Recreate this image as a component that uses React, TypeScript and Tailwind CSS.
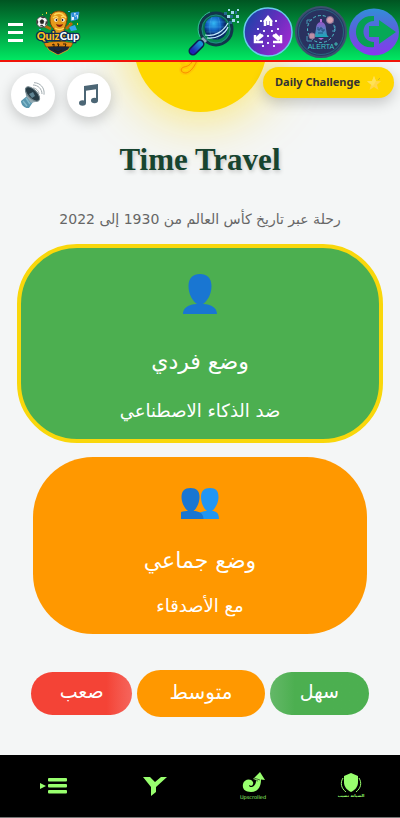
import type { ReactNode } from "react";
import clsx from "clsx";

const QuizCupLogo = () => (
  <svg viewBox="0 0 46 46" className="size-[46px]" aria-hidden="true">
    <g fill="#f4c430">
      <rect x="11" y="3" width="1" height="2" />
      <rect x="33" y="2" width="2" height="1" fill="#38bdf8" />
      <rect x="7" y="5" width="1" height="1" fill="#a3e635" />
      <rect x="15" y="5" width="1" height="1" fill="#f97316" />
      <rect x="34" y="14" width="1" height="2" fill="#facc15" />
      <rect x="4" y="20" width="2" height="1" fill="#38bdf8" />
      <rect x="42" y="14" width="1" height="2" fill="#facc15" />
    </g>
    <path d="M16 20l-6-3M31 20l6-6" stroke="#b86a08" strokeWidth="3" />
    <path d="M24 2c6 0 9 4 8 9-1 4-1 6-3 9l2 12H17l2-12c-3-3-4-6-4-10 0-5 4-8 9-8z" fill="#e59a1b" stroke="#7a4307" />
    <path d="M19 6c3-3 8-2 10 1M18 9c2-2 4-2 5 0M26 8c2-1 4-1 5 1M20 19c3 2 6 2 9 0" fill="none" stroke="#ffd65a" strokeWidth="1.4" />
    <circle cx="21" cy="11" r="1.8" fill="#fff" />
    <circle cx="28" cy="11" r="1.8" fill="#fff" />
    <circle cx="21.5" cy="11" r=".9" fill="#111" />
    <circle cx="27.5" cy="11" r=".9" fill="#111" />
    <path d="M21 15c2 1 5 1 7 0-1 4-6 4-7 0z" fill="#8b1a10" />
    <circle cx="7" cy="13" r="5.5" fill="#f5f5f5" stroke="#333" strokeWidth=".8" />
    <path d="M5 12l2-1.600 2 1.600-.8 2.600H5.800zM2 11l1 2-1 2M6 8l2 1 2-1M11 12l1 2-2 2M5 17l2-1 2 2" fill="#222" stroke="#222" strokeWidth=".6" />
    <path d="M36 4l8-1-1 7-7 2z" fill="#e8f7ff" stroke="#2080c8" strokeWidth=".8" />
    <path d="M36 4l3 0 1 4-3 0zM41 3l3 0-1 3-3 1zM39 8l3-1 0 3-3 1z" fill="#2b8ddb" />
    <path d="M34 18l6-2 2 5-6 1z" fill="#36a6ed" />
    <path d="M10 35h27l-4 6-10 5-9-5z" fill="#18263c" stroke="#f4a51c" strokeWidth=".8" />
    <path d="M9 34c9-2 20-2 29 0l-2 4c-8-1-17-1-25 0z" fill="#e38a13" stroke="#603608" strokeWidth=".6" />
    <path d="M17 36l2-1v3M22 35h2l-1 3M28 35l3 0-1 3M19 41l4 2 4-2" fill="none" stroke="#2a1a08" />
    <text x="23" y="31" textAnchor="middle" stroke="#102c55" strokeWidth="2.500" paintOrder="stroke" className="font-['Lato'] text-[11px] font-black">
      <tspan fill="#ffc21f">Quiz</tspan>
      <tspan fill="#fff">Cup</tspan>
    </text>
  </svg>
);

const SearchLogo = () => (
  <svg viewBox="0 0 54 50" className="h-[50px] w-[54px]" aria-hidden="true">
    <defs>
      <radialGradient id="globe" cx=".4" cy=".3">
        <stop offset="0" stopColor="#32b8f4" />
        <stop offset=".6" stopColor="#1262c4" />
        <stop offset="1" stopColor="#082866" />
      </radialGradient>
      <linearGradient id="handle" x1="0" x2="1" y1="1" y2="0">
        <stop offset="0" stopColor="#1f23b5" />
        <stop offset="1" stopColor="#1691d2" />
      </linearGradient>
    </defs>
    <circle cx="29" cy="22" r="16" fill="#0b5f55" fillOpacity=".55" stroke="#12344c" strokeWidth="3" />
    <circle cx="29" cy="22" r="14" fill="none" stroke="#2b8b9c" strokeWidth=".7" />
    <path d="M13 30A18 18 0 0 1 23 5" fill="none" stroke="#43c6b0" strokeWidth=".8" />
    <circle cx="29" cy="21" r="11.500" fill="url(#globe)" />
    <path d="M19 15h20M18 20h22M19 25h20M25 10c-3 7-3 15 0 22M31 10c3 7 3 15-1 22" fill="none" stroke="#62cdfb" strokeWidth=".4" opacity=".6" />
    <path d="M18 28c9 2 18-3 23-12M20 31c10 1 18-4 21-11" fill="none" stroke="#c3edff" strokeWidth="1.200" />
    <path d="M15 31l4 4" stroke="#87a6b8" strokeWidth="3" />
    <path d="M13 37L6 44" stroke="#0d1d55" strokeWidth="9" strokeLinecap="round" />
    <path d="M13 37L6 44" stroke="url(#handle)" strokeWidth="6" strokeLinecap="round" />
    <path d="M40 8h3v3h-3zM44 4h3v3h-3zM49 8h3v3h-3zM45 12h3v3h-3zM41 2h2v2h-2zM50 2h2v2h-2zM50 14h2v2h-2z" fill="#9ed9ec" />
    <path d="M37 5h3v3h-3zM43 8h3v3h-3zM48 4h2v3h-2zM42 14h3v3h-3z" fill="#226e8f" />
  </svg>
);

const GatherLogo = () => (
  <svg viewBox="0 0 50 50" className="size-[50px]" aria-hidden="true">
    <defs>
      <linearGradient id="gather" x1="0" x2="1" y1=".2" y2=".8">
        <stop offset="0" stopColor="#1646a8" />
        <stop offset=".5" stopColor="#632ebd" />
        <stop offset="1" stopColor="#a52bd2" />
      </linearGradient>
    </defs>
    <circle cx="25" cy="25" r="24" fill="url(#gather)" stroke="#69cbed" strokeWidth="1.500" />
    <path
      d="M22 19v-5M28 19v-5M25 18v-6M21 15l4-5 4 5M20 28l-6 5M18 27l-5 5M12 28v7h8M30 28l6 5M32 27l5 5M38 28v7h-8"
      fill="none"
      stroke="#fff"
      strokeWidth="2.500"
    />
    <g fill="#e9eaff">
      <rect x="17" y="13" width="2" height="2" />
      <rect x="32" y="13" width="2" height="2" />
      <rect x="14" y="21" width="2" height="2" />
      <rect x="34" y="21" width="2" height="2" />
      <rect x="20" y="23" width="2" height="2" />
      <rect x="28" y="23" width="2" height="2" />
      <rect x="24" y="28" width="2" height="2" />
      <rect x="19" y="38" width="2" height="2" />
      <rect x="30" y="38" width="2" height="2" />
      <rect x="24" y="35" width="2" height="2" />
    </g>
  </svg>
);

const AlertLogo = () => (
  <svg viewBox="0 0 52 52" className="size-[52px]" aria-hidden="true">
    <defs>
      <linearGradient id="bell" x2="0" y2="1">
        <stop offset="0" stopColor="#9655c9" />
        <stop offset="1" stopColor="#18a9b8" />
      </linearGradient>
    </defs>
    <circle cx="26" cy="26" r="25" fill="#263866" stroke="#3c526e" strokeWidth="2" />
    <circle cx="26" cy="26" r="22.500" fill="#29315f" stroke="#2b7184" strokeWidth=".8" />
    <circle cx="26" cy="23" r="13.500" fill="none" stroke="#50c4cc" strokeDasharray="3 2" />
    <path d="M12 18v-4h5M40 20v5h-3M17 35h-5v-5" fill="none" stroke="#4797b5" />
    <path d="M18 31h16c-3-2-2-4-3-8 0-4-2-7-5-7s-5 3-5 7c-1 4 0 6-3 8z" fill="url(#bell)" />
    <path d="M23 32h6l-3 2zM25 13h2v3h-2z" fill="#b46ed5" />
    <path d="M23 21v3h2v-2h2v3h2v-2M23 27h5" fill="none" stroke="#1e517d" />
    <circle cx="35" cy="14" r="3.500" fill="#d3a2b0" stroke="#8d6e93" />
    <circle cx="17" cy="30" r="3" fill="#bd8ea4" stroke="#8d6e93" />
    <path d="M41 36v4M39 38h4" stroke="#48d4c4" strokeWidth=".8" />
    <text x="26" y="43" textAnchor="middle" fill="#3cc8c3" className="font-['Liberation_Sans'] text-[7px]">ALERTA</text>
  </svg>
);

const ExitLogo = () => (
  <svg viewBox="0 0 50 50" className="size-[50px]" aria-hidden="true">
    <defs>
      <linearGradient id="exit" x2="0" y2="1">
        <stop offset="0" stopColor="#328ed8" />
        <stop offset=".5" stopColor="#5b5fdc" />
        <stop offset="1" stopColor="#8a36ef" />
      </linearGradient>
    </defs>
    <ellipse cx="25" cy="25" rx="25" ry="23.500" fill="url(#exit)" />
    <path d="M25 9c-24-2-24 34 0 31v-5c-14 0-14-21 0-21z" fill="#079f54" />
    <path d="M20 19h10v-6l17 12-17 12v-7H20z" fill="#07a957" />
  </svg>
);

const SpeakerIcon = () => (
  <svg viewBox="0 0 26 26" className="size-[26px]" aria-hidden="true">
    <path d="M1 19l6-5 6 6-4 6c-4 1-8-3-8-7z" fill="#5895ad" />
    <path d="M3 19l4 5M6 16l4 6" stroke="#82b9cb" strokeWidth="1.500" />
    <path d="M6 14L5 6l4 0 10 11 0 2-8 2z" fill="#93aab2" />
    <ellipse cx="12.500" cy="12" rx="4.500" ry="9" transform="rotate(-45 12.500 12)" fill="#263b45" stroke="#71838a" />
    <path d="M9 12l4-2 2 4-3 2z" fill="#5e8392" />
    <path d="M13 6c3 0 6 3 6 6M13 3c5 0 9 4 9 9M14 .7c6 0 11 5 10 12" fill="none" stroke="#a3adb1" />
  </svg>
);

const NotesIcon = () => (
  <svg viewBox="0 0 22 24" className="h-6 w-[22px]" aria-hidden="true">
    <path d="M6 3l14-2v5L6 8z" fill="#4c6675" />
    <path d="M7 4v16M19 3v14" stroke="#4c6675" strokeWidth="2" />
    <ellipse cx="4.500" cy="20" rx="3.500" ry="2.800" fill="#4c6675" />
    <ellipse cx="16.500" cy="17.500" rx="3.500" ry="2.800" fill="#4c6675" />
  </svg>
);

const StarIcon = () => (
  <svg viewBox="0 0 16 16" className="size-4" aria-hidden="true">
    <path d="M8 1l2 5 5 .3-4 3.400L12.500 15 8 12l-4.500 3L5 9.700 1 6.300 6 6z" fill="#ffd54a" />
    <path d="M8 1l2 5-3 5-6-4.700L6 6z" fill="#ffe254" />
    <path d="M12 5l2-2" stroke="#c9ab28" strokeWidth=".8" />
  </svg>
);

const PersonIcon = () => (
  <svg viewBox="0 0 36 40" className="h-10 w-9" fill="#1976d2" aria-hidden="true">
    <path d="M18 0c7 0 11.500 4 11.500 12 0 8-4 15-8.500 18 0 0 14 0 14 10H1C1 30 15 30 15 30 10.500 27 6.500 20 6.500 12 6.500 4 11 0 18 0z" />
  </svg>
);

const PeopleIcon = () => (
  <svg viewBox="0 0 38 31" className="h-[31px] w-[38px]" aria-hidden="true">
    <path d="M29 0c6 0 8.500 3 8.500 9S34 21 31 23c4 0 7 2 7 8H15c0-6 6-8 11-8-3-2-6-8-6-14s3-9 9-9z" fill="#2196f3" />
    <path d="M9.500 0c6 0 9 3 9 9s-3 12-6 14c5 0 10 2 10 8H0V24c2-1 5-1 7-1-3-2-6.500-8-6.500-14s3-9 9-9z" fill="#1976d2" />
  </svg>
);

const ListIcon = () => (
  <svg viewBox="0 0 34 16" className="h-4 w-[34px]" fill="#98ff6e" aria-hidden="true">
    <path d="M0 5l6 3-6 3z" />
    <rect x="8" y="0" width="19" height="3.400" rx="1" />
    <rect x="8" y="6" width="19" height="3.400" rx="1" />
    <rect x="8" y="12" width="19" height="3.400" rx="1" />
  </svg>
);

const YIcon = () => (
  <svg viewBox="0 0 24 19" className="h-[19px] w-6" fill="#98ff6e" aria-hidden="true">
    <path d="M0 0h7l5 5 6-5h6L13 10v5l-5 4v-9z" />
  </svg>
);

const UpscrolledIcon = () => (
  <svg viewBox="0 0 28 28" className="size-7" fill="#98ff6e" aria-hidden="true">
    <path d="M21 0l5 8-4-.5C22 16 18 20 12 20 6 20 3 17 4 12 5 7 12 6 14 10c1 3-2 5-4 3 0 4 7 2 7-4V8l-3-1z" />
    <path d="M15 6l6 2M14 8l5 1" stroke="#111" strokeWidth=".6" />
    <text x="14" y="27" textAnchor="middle" className="font-['DejaVu_Sans'] text-[5px]">Upscrolled</text>
  </svg>
);

const ShieldIcon = () => (
  <svg viewBox="0 0 40 28" className="h-7 w-10" fill="#98ff6e" aria-hidden="true">
    <path d="M20 1l7 3v6c0 5-3 8-7 10-4-2-7-5-7-10V4z" />
    <path d="M12 6c-3 5-2 10 3 14M28 6c3 5 2 10-3 14" fill="none" stroke="#98ff6e" />
    <text x="20" y="25" textAnchor="middle" className="font-['DejaVu_Sans'] text-[4px] font-bold">الصيانة نصيب</text>
  </svg>
);

const topLinks = [
  { label: "Search", icon: <SearchLogo /> },
  { label: "Gather", icon: <GatherLogo /> },
  { label: "Alerta", icon: <AlertLogo /> },
  { label: "Exit", icon: <ExitLogo /> },
];

const bottomLinks = [
  { label: "Menu", icon: <ListIcon /> },
  { label: "Y", icon: <YIcon /> },
  { label: "Upscrolled", icon: <UpscrolledIcon /> },
  { label: "Shield", icon: <ShieldIcon /> },
];

const RoundButton = ({ label, children }: { label: string; children: ReactNode }) => (
  <button
    aria-label={label}
    className="flex size-11 items-center justify-center rounded-full bg-white shadow-[0_4px_14px_rgba(0,0,0,0.2)]"
  >
    {children}
  </button>
);

type ModeCardProps = {
  title: string;
  text: string;
  icon: ReactNode;
  selected?: boolean;
};

const ModeCard = ({ title, text, icon, selected }: ModeCardProps) => (
  <button
    dir="rtl"
    aria-pressed={!!selected}
    className={clsx(
      "flex flex-col items-center rounded-[60px] pb-3 text-white",
      selected
        ? "mx-[17px] border-4 border-[#f9d70b] bg-[#4caf50] pt-[26px]"
        : "mx-[33px] bg-[#ff9800] pt-[31px]"
    )}
  >
    {icon}
    <span className={clsx("text-[22px] leading-10", selected ? "mt-7" : "mt-[22px]")}>
      {title}
    </span>
    <span className={clsx("text-[18px] leading-8", selected ? "mt-[13px]" : "mt-[9px]")}>
      {text}
    </span>
  </button>
);

const App = () => {
  return (
    <div className="flex min-h-screen flex-col bg-[#f4f6f6] font-['DejaVu_Sans',sans-serif]">
      <header className="z-10 flex h-[62px] items-center border-b-2 border-[#f01408] bg-linear-to-b from-[#005522] to-[#00e862] pr-px pl-2">
        <button aria-label="Open menu" className="flex flex-col gap-[5px] pt-1">
          <span className="h-[3px] w-[15px] bg-white" />
          <span className="h-[3px] w-[15px] bg-white" />
          <span className="h-[3px] w-[15px] bg-white" />
        </button>
        <a href="#home" aria-label="Quiz Cup" className="ml-3 pt-1">
          <QuizCupLogo />
        </a>
        <nav className="ml-auto flex items-center gap-[2px] pt-1">
          {topLinks.map((link) => (
            <a key={link.label} href="#top" aria-label={link.label}>
              {link.icon}
            </a>
          ))}
        </nav>
      </header>

      <main className="relative flex flex-1 flex-col overflow-hidden pb-[38px]">
        <div className="absolute inset-x-0 top-0 z-10 flex items-start pt-[5px] pr-[6px] pl-[11px]">
          <div className="flex gap-3 pt-[6px]">
            <RoundButton label="Sound">
              <SpeakerIcon />
            </RoundButton>
            <RoundButton label="Music">
              <NotesIcon />
            </RoundButton>
          </div>
          <button className="ml-auto flex h-[31px] items-center gap-[6px] rounded-full bg-[#ffd600] px-3 font-['Noto_Sans',sans-serif] text-[11px] font-bold text-[#333] shadow-[0_5px_14px_rgba(0,0,0,0.2)]">
            Daily Challenge
            <StarIcon />
          </button>
        </div>

        <div className="mx-auto -mt-[83px] size-[133px] shrink-0 rounded-full bg-[#ffd700] shadow-[0_0_60px_rgba(255,215,0,0.7)]">
          <svg viewBox="0 0 133 133" className="size-full" fill="none" aria-hidden="true">
            <path d="M64 79c-3 8-7 14-12 15-6 0-6-5-2-6 5-1 8-3 9-9M47 79c0 5 3 8 8 9" stroke="#ffb90a" strokeWidth="4" opacity=".5" />
            <path d="M64 79c-3 8-7 14-12 15-6 0-6-5-2-6 5-1 8-3 9-9" stroke="#fb8c00" />
          </svg>
        </div>

        <h1 className="mt-7 text-center font-['Liberation_Serif',serif] text-[31px] leading-10 font-bold text-[#17442f] [text-shadow:1px_2px_4px_rgba(0,0,0,0.2)]">
          Time Travel
        </h1>
        <p dir="rtl" className="mt-[27px] text-center text-[14px] leading-6 text-[#666]">
          رحلة عبر تاريخ كأس العالم من 1930 إلى 2022
        </p>

        <div className="mt-[13px] flex flex-col gap-[14px]">
          <ModeCard
            selected
            title="وضع فردي"
            text="ضد الذكاء الاصطناعي"
            icon={<PersonIcon />}
          />
          <ModeCard title="وضع جماعي" text="مع الأصدقاء" icon={<PeopleIcon />} />
        </div>

        <div dir="rtl" className="mt-9 flex items-center gap-[5px] px-[31px] text-[19px] text-white">
          <button className="h-[43px] flex-[99] rounded-full bg-linear-to-r from-[#64b868] to-[#4caf50] to-25% pb-1">
            سهل
          </button>
          <button className="h-[47px] flex-[127] rounded-full bg-[#ff9800] pb-1 text-[20px]">
            متوسط
          </button>
          <button className="h-[43px] flex-[101] rounded-full bg-linear-to-l from-[#f5655c] to-[#f44336] to-25% pb-1">
            صعب
          </button>
        </div>
      </main>

      <nav className="grid h-[63px] grid-cols-4 border-b border-[#777] bg-black pl-2">
        {bottomLinks.map((link) => (
          <a
            key={link.label}
            href="#bottom"
            aria-label={link.label}
            className="flex items-center justify-center"
          >
            {link.icon}
          </a>
        ))}
      </nav>
    </div>
  );
};

export default App;
